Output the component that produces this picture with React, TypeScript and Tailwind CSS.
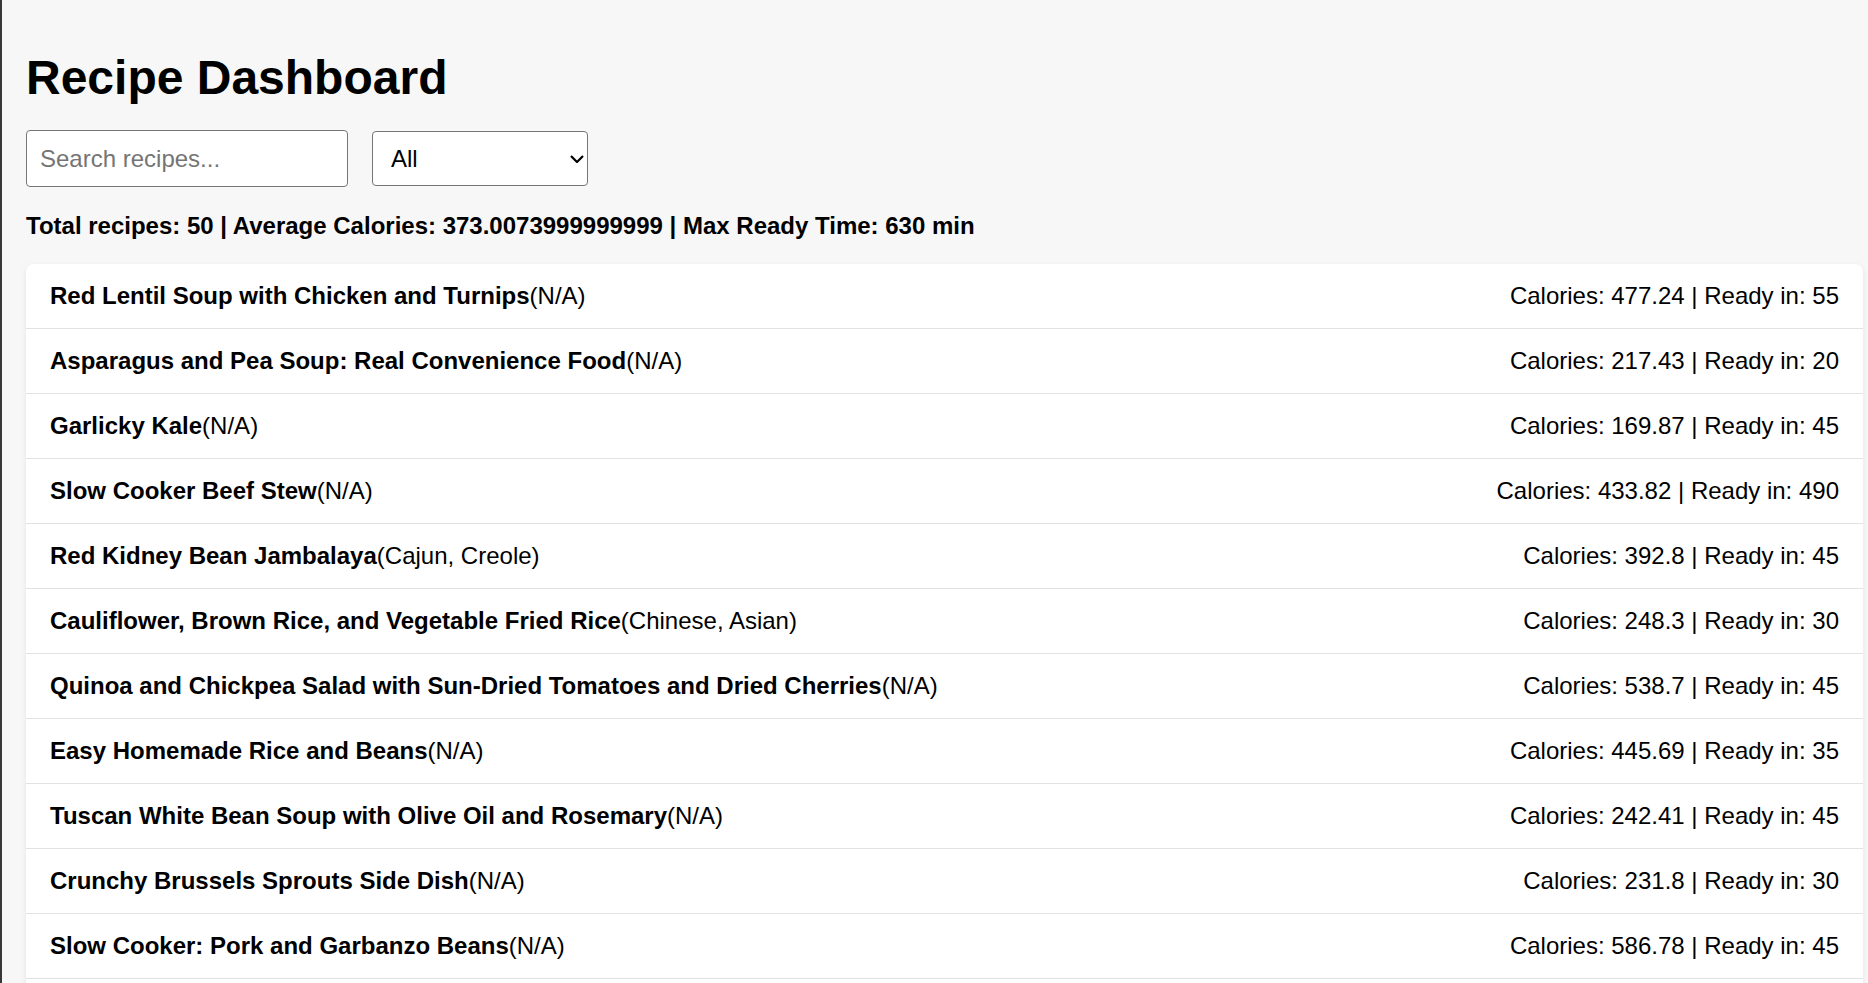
const recipes = [
    { title: "Red Lentil Soup with Chicken and Turnips", cuisines: "N/A", calories: "477.24", ready: 55 },
    { title: "Asparagus and Pea Soup: Real Convenience Food", cuisines: "N/A", calories: "217.43", ready: 20 },
    { title: "Garlicky Kale", cuisines: "N/A", calories: "169.87", ready: 45 },
    { title: "Slow Cooker Beef Stew", cuisines: "N/A", calories: "433.82", ready: 490 },
    { title: "Red Kidney Bean Jambalaya", cuisines: "Cajun, Creole", calories: "392.8", ready: 45 },
    { title: "Cauliflower, Brown Rice, and Vegetable Fried Rice", cuisines: "Chinese, Asian", calories: "248.3", ready: 30 },
    { title: "Quinoa and Chickpea Salad with Sun-Dried Tomatoes and Dried Cherries", cuisines: "N/A", calories: "538.7", ready: 45 },
    { title: "Easy Homemade Rice and Beans", cuisines: "N/A", calories: "445.69", ready: 35 },
    { title: "Tuscan White Bean Soup with Olive Oil and Rosemary", cuisines: "N/A", calories: "242.41", ready: 45 },
    { title: "Crunchy Brussels Sprouts Side Dish", cuisines: "N/A", calories: "231.8", ready: 30 },
    { title: "Slow Cooker: Pork and Garbanzo Beans", cuisines: "N/A", calories: "586.78", ready: 45 },
]

const Row = ({ title, cuisines, calories, ready }: any) => {
    return (
        <li className=" flex items-center justify-between px-[24px] py-[18px] border-b-[1.5px] border-[#e2e2e2] leading-[28px]">
            <p>
                <span className=" font-bold">{title}</span>({cuisines})
            </p>
            <p>
                Calories: {calories} | Ready in: {ready}
            </p>
        </li>
    )
}

export default function App() {
    return (
        <div className=" min-h-screen bg-[#f7f7f7] border-l-2 border-[#383838] pl-[24px] pr-[5px] pt-[50px] text-[24px] text-black font-['Liberation_Sans',Arial,sans-serif]">
            <h1 className=" text-[48px] leading-[55px] font-bold mb-[25px]">Recipe Dashboard</h1>

            <div className=" flex items-center gap-x-[24px]">
                <input
                    type="text"
                    placeholder="Search recipes..."
                    className=" w-[322px] h-[57px] px-[13px] bg-white border-[1.5px] border-[#767676] rounded-[4px] placeholder:text-[#757575] outline-none"
                />
                <div className=" relative">
                    <select className=" appearance-none w-[216px] h-[55px] pl-[18px] bg-white border-[1.5px] border-[#767676] rounded-[4px] outline-none">
                        <option>All</option>
                    </select>
                    {/* chevron like the native windows select */}
                    <svg className=" absolute right-[4px] top-[24px] pointer-events-none" width="14" height="8" viewBox="0 0 14 8" fill="none">
                        <path d="M1 1L7 7L13 1" stroke="#000" strokeWidth="2.2" />
                    </svg>
                </div>
            </div>

            <p className=" mt-[25px] font-bold leading-[28px]">
                Total recipes: 50 | Average Calories: 373.0073999999999 | Max Ready Time: 630 min
            </p>

            <ul className=" mt-[24px] bg-white rounded-t-[8px] shadow-[0_2px_6px_rgba(0,0,0,0.08)]">
                {recipes.map((r) => (
                    <Row key={r.title} {...r} />
                ))}
                <li className=" h-[40px]"></li>
            </ul>
        </div>
    )
}
